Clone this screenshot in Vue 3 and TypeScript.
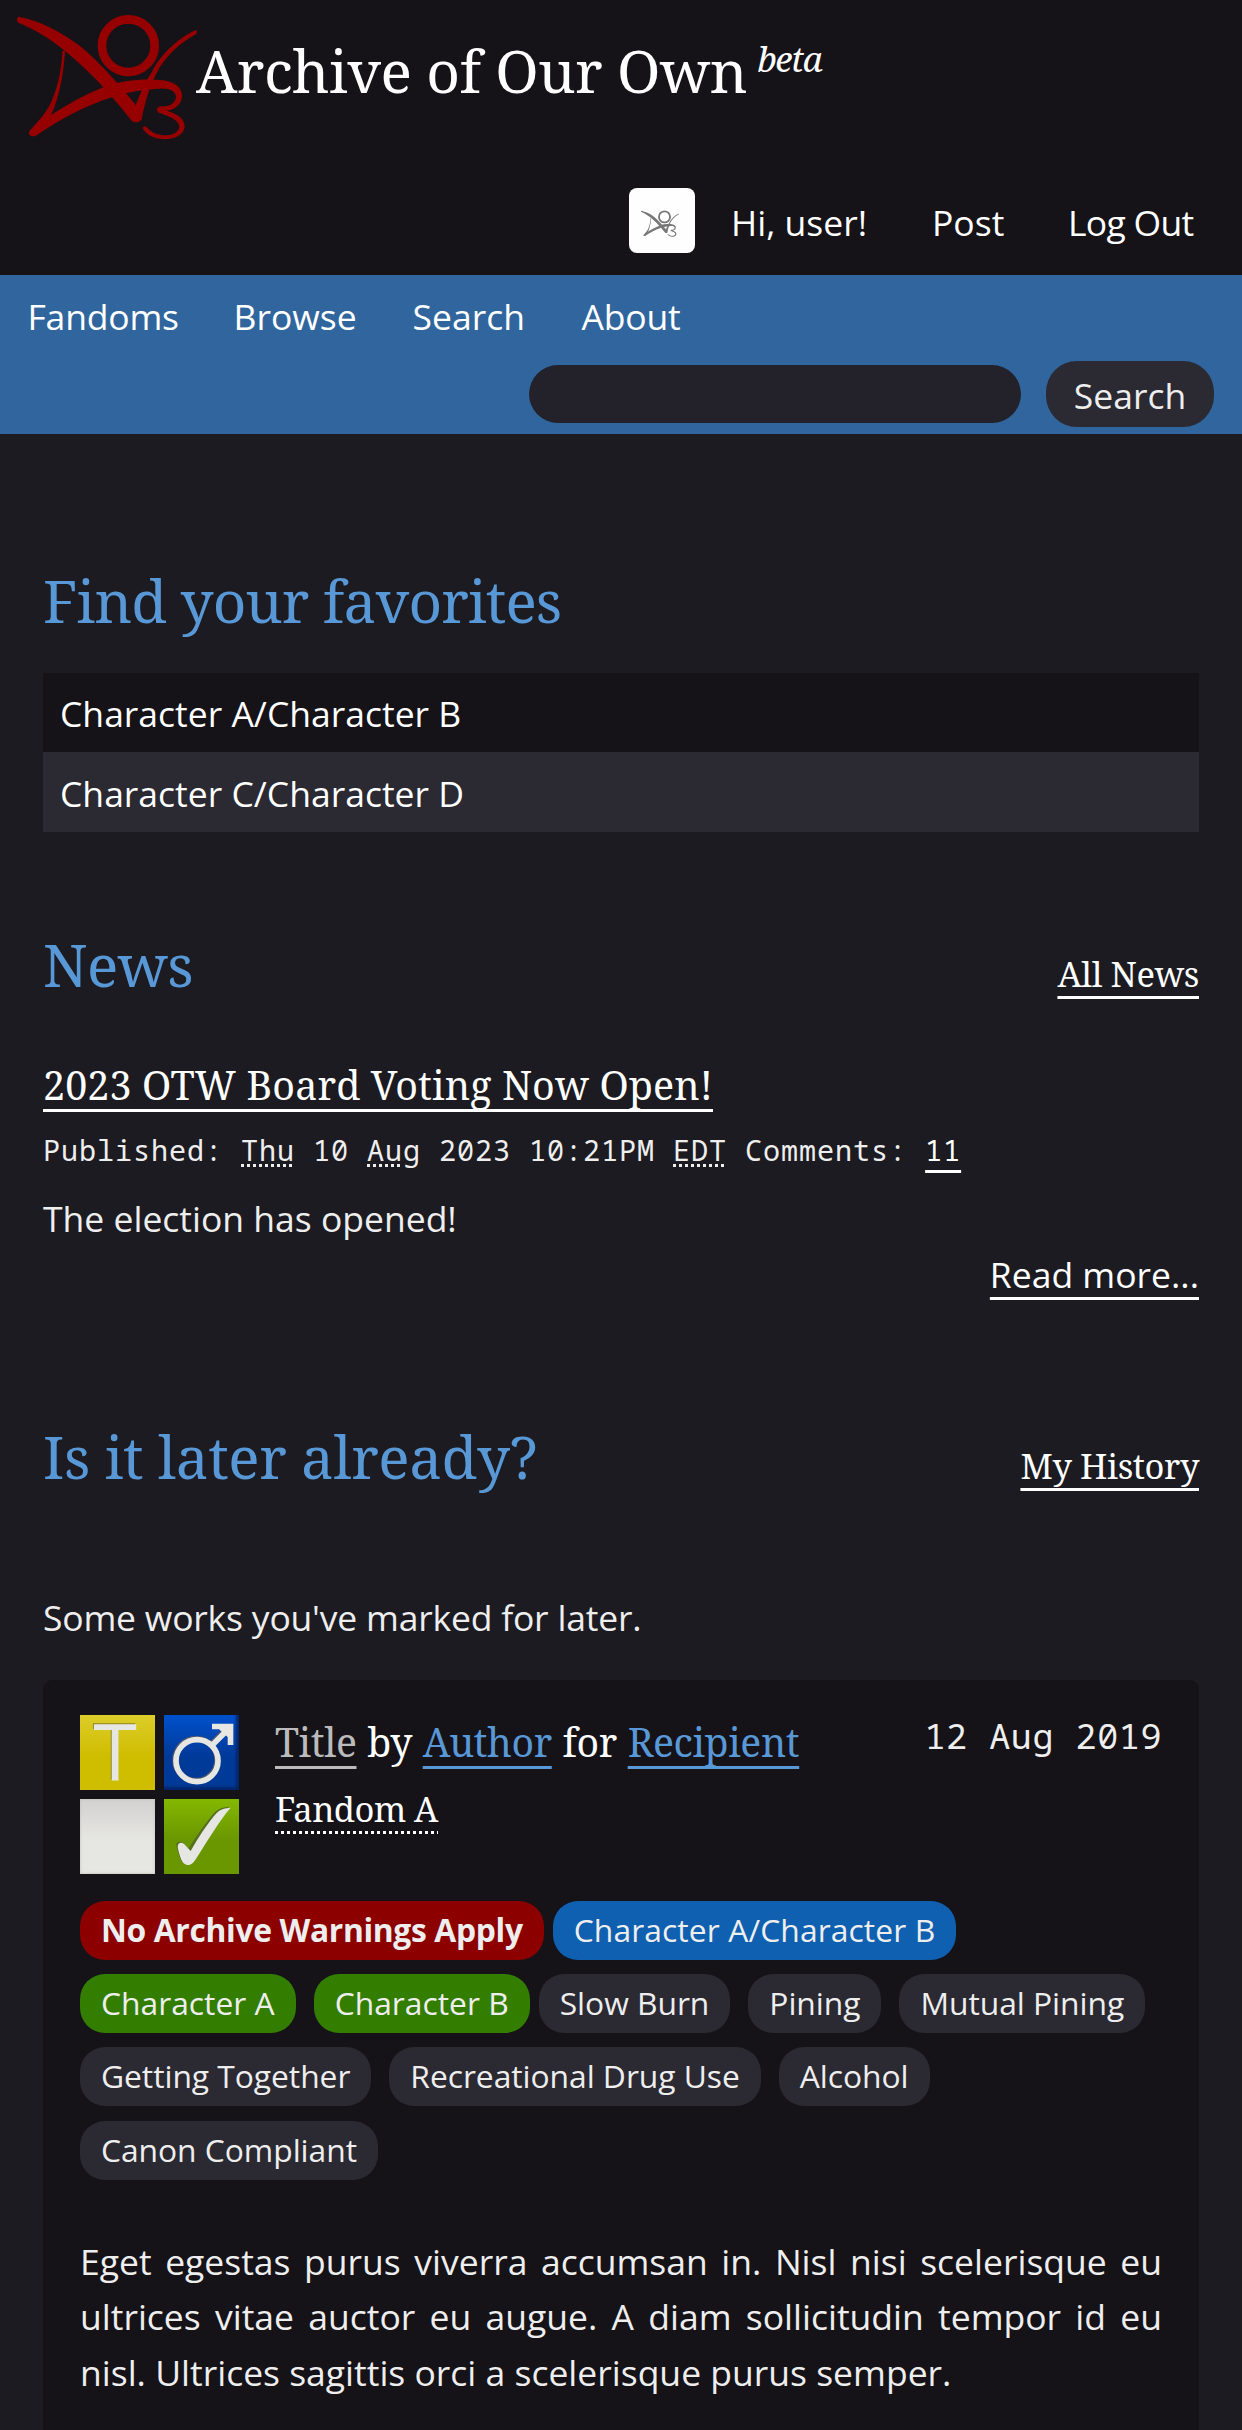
<script setup lang="ts">
interface Tag {
  label: string
  kind: 'warning' | 'relationship' | 'character' | 'freeform'
  last?: boolean
}

const menu: string[] = ['Fandoms', 'Browse', 'Search', 'About']
const favorites: string[] = ['Character A/Character B', 'Character C/Character D']
const tags: Tag[] = [
  { label: 'No Archive Warnings Apply', kind: 'warning', last: true },
  { label: 'Character A/Character B', kind: 'relationship', last: true },
  { label: 'Character A', kind: 'character' },
  { label: 'Character B', kind: 'character', last: true },
  { label: 'Slow Burn', kind: 'freeform' },
  { label: 'Pining', kind: 'freeform' },
  { label: 'Mutual Pining', kind: 'freeform' },
  { label: 'Getting Together', kind: 'freeform' },
  { label: 'Recreational Drug Use', kind: 'freeform' },
  { label: 'Alcohol', kind: 'freeform' },
  { label: 'Canon Compliant', kind: 'freeform' },
]
</script>

<template>
  <div class="page">
    <header class="header">
      <div class="brand">
        <svg class="logo" viewBox="51 42 540 378">
          <g id="ao3-mark">
            <circle cx="385" cy="137" r="79" fill="none" stroke="currentColor" stroke-width="26" />
            <path d="M55 50C120 62 185 96 240 138C300 188 350 245 402 308L426 345C428 366 408 372 395 362C355 312 325 278 290 240C235 184 150 104 55 68C49 63 50 53 55 50Z" fill="currentColor" />
            <path d="M590 89C535 112 480 165 456 215C432 250 412 300 398 340L424 362C432 320 442 280 458 245C478 190 525 135 590 101Z" fill="currentColor" />
            <path d="M187 152C184 225 165 300 132 342C118 362 98 380 88 396C84 408 100 414 112 404C134 382 152 352 163 322C182 270 192 210 195 154Z" fill="currentColor" />
            <path d="M90 391C160 336 240 290 310 262C370 238 440 236 490 241C530 246 548 268 546 290C544 314 522 330 500 332C536 342 556 360 554 382C550 408 520 418 494 418C466 418 436 404 428 384C430 377 435 378 440 382C456 400 476 406 496 406C520 406 536 396 538 380C538 364 516 350 476 338C468 332 470 322 480 319C508 322 528 308 528 290C526 272 506 264 478 266C440 268 400 272 340 290C260 314 180 358 112 404C98 414 82 404 90 391Z" fill="currentColor" />
          </g>
        </svg>
        <h1 class="site">Archive of Our Own<sup>beta</sup></h1>
      </div>
      <nav class="greeting">
        <span class="avatar">
          <svg viewBox="51 42 540 378"><use href="#ao3-mark" /></svg>
        </span>
        <a>Hi, user!</a>
        <a>Post</a>
        <a class="logout">Log Out</a>
      </nav>
    </header>

    <nav class="primary">
      <div class="menu">
        <a v-for="item in menu" :key="item">{{ item }}</a>
      </div>
      <form class="search" @submit.prevent>
        <input type="text" />
        <button type="submit">Search</button>
      </form>
    </nav>

    <main class="main">
      <h2 class="find">Find your favorites</h2>
      <ul class="favorites">
        <li v-for="fav in favorites" :key="fav">{{ fav }}</li>
      </ul>

      <div class="heading news">
        <h2>News</h2>
        <a class="more">All News</a>
      </div>
      <h3 class="post-title"><a>2023 OTW Board Voting Now Open!</a></h3>
      <p class="meta">Published: <abbr>Thu</abbr> 10 <abbr class="short">Aug</abbr> 2023 10:21PM <abbr>EDT</abbr> Comments: <a>11</a></p>
      <p class="summary">The election has opened!</p>
      <p class="read"><a>Read more...</a></p>

      <div class="heading later">
        <h2>Is it later already?</h2>
        <a class="more">My History</a>
      </div>
      <p class="note">Some works you've marked for later.</p>

      <article class="work">
        <div class="work-head">
          <div class="required">
            <svg class="tile teen" viewBox="0 0 225 225">
              <text class="shade" x="102" y="196" text-anchor="middle">T</text>
              <text x="105" y="198" text-anchor="middle">T</text>
            </svg>
            <svg class="tile male" viewBox="0 0 225 225">
              <g class="shade" transform="translate(-3 -3)">
                <circle cx="99" cy="137" r="63" />
                <path d="M143 92L190 45" />
              </g>
              <g>
                <circle cx="99" cy="137" r="63" />
                <path d="M143 92L190 45" />
                <path class="solid" d="M144 26H208V90H191V66L165 43H144Z" />
              </g>
            </svg>
            <svg class="tile blank" viewBox="0 0 225 225" />
            <svg class="tile done" viewBox="0 0 225 225">
              <path class="tick-shade" d="M40 137C48 128 58 130 64 139L76 152C100 115 132 68 156 42C170 30 184 27 198 26C164 65 132 120 100 170C88 190 80 198 70 198C58 198 52 188 47 168C43 152 40 146 40 137Z" transform="translate(-3 -3)" />
              <path class="tick" d="M42 137C48 128 58 130 64 139L80 156C102 117 134 68 158 42C170 30 184 27 200 26C166 65 134 120 102 170C90 190 82 198 72 198C60 198 52 188 47 168C43 152 40 146 42 137Z" />
            </svg>
          </div>
          <div class="work-title">
            <h4><a class="visited">Title</a> by <a class="blue">Author</a> for <a class="blue">Recipient</a></h4>
            <h5><a>Fandom A</a></h5>
          </div>
          <p class="date">12 Aug 2019</p>
        </div>
        <ul class="tags">
          <li v-for="(tag, i) in tags" :key="i" :class="[tag.kind, { last: tag.last }]">{{ tag.label }}</li>
        </ul>
        <p class="blurb">Eget egestas purus viverra accumsan in. Nisl nisi scelerisque eu ultrices vitae auctor eu augue. A diam sollicitudin tempor id eu nisl. Ultrices sagittis orci a scelerisque purus semper.</p>
      </article>
    </main>
  </div>
</template>

<style>
body {
  margin: 0;
  background: #1c1b21;
}
</style>

<style scoped>
.page {
  width: 1242px;
  height: 2430px;
  overflow: hidden;
  background: #1c1b21;
  color: #eee;
  font-family: 'Open Sans', 'Noto Sans', sans-serif;
  font-size: 35.5px;
  line-height: 56px;
}
h1, h2, h3, h4, h5, p, ul {
  margin: 0;
  padding: 0;
  font-weight: 400;
  list-style: none;
}
h1, h2, h3, h4, h5, .more {
  font-family: 'Noto Serif', 'Liberation Serif', serif;
}
a {
  color: #fff;
}

.header {
  box-sizing: border-box;
  height: 275px;
  padding: 14px 0 0 17px;
  background: #151218;
}
.brand {
  display: flex;
  align-items: flex-start;
}
.logo {
  width: 180px;
  height: 126px;
  color: #960000;
}
.site {
  margin: 16px 0 0 -1px;
  color: #fff;
  font-size: 58.6px;
  line-height: 80px;
  letter-spacing: -0.5px;
  white-space: nowrap;
}
.site sup {
  margin-left: 10px;
  font-size: 35px;
  font-style: italic;
  line-height: 0;
  letter-spacing: -1.5px;
  vertical-align: 21px;
}
.greeting {
  display: grid;
  grid-template-columns: 102px 201px 136px auto;
  margin: 48px 0 0 612px;
  line-height: 68px;
  height: 65px;
}
.logout {
  letter-spacing: -0.7px;
}
.avatar {
  width: 66px;
  height: 65px;
  border-radius: 8px;
  background: #fefefe;
  line-height: 0;
}
.avatar svg {
  width: 38px;
  height: 27px;
  margin: 22px 0 0 12px;
  color: #777;
}

.primary {
  box-sizing: border-box;
  height: 159px;
  padding-top: 13px;
  background: #30669d;
}
.menu {
  display: grid;
  grid-template-columns: 206px 179px 169px auto;
  padding-left: 27.5px;
}
.menu a:first-child,
.menu a:last-child {
  letter-spacing: -0.2px;
}
.search {
  display: flex;
  justify-content: flex-end;
  align-items: center;
  gap: 25px;
  margin: 17px 28px 0 0;
}
.search input {
  box-sizing: border-box;
  width: 492px;
  height: 58px;
  border: 0;
  border-radius: 29px;
  background: #23212a;
}
.search button {
  width: 168px;
  height: 66px;
  padding: 1px 0 0;
  border: 0;
  border-radius: 31px;
  background: #2b2932;
  color: #eee;
  font: inherit;
}

.main {
  padding: 127px 43px 0;
}
h2 {
  color: #5998d6;
  font-size: 58.4px;
  line-height: 80px;
  letter-spacing: -0.6px;
}
.find {
  letter-spacing: -0.85px;
}
.later h2 {
  letter-spacing: -0.4px;
}
.favorites {
  margin-top: 32px;
  color: #fff;
}
.favorites li {
  box-sizing: border-box;
  height: 80px;
  padding: 1px 17px 0;
  background: #2b2932;
  line-height: 80px;
}
.favorites li:first-child {
  height: 79px;
  padding-top: 0;
  background: #151218;
}
.heading {
  display: flex;
  justify-content: space-between;
  align-items: baseline;
}
.more {
  font-size: 34.5px;
  line-height: 50px;
  letter-spacing: -0.4px;
}
.more,
.post-title a,
.meta a,
.read a,
h4 a {
  text-decoration: underline;
  text-decoration-thickness: 3px;
  text-decoration-skip-ink: none;
  text-underline-offset: 9px;
}
.news {
  margin-top: 93px;
}
.post-title {
  margin-top: 50px;
  font-size: 39.4px;
  line-height: 60px;
  letter-spacing: 0.12px;
}
.meta {
  margin-top: 10px;
  font-family: 'Noto Sans Mono', 'Liberation Mono', monospace;
  font-size: 28.5px;
  line-height: 50px;
  letter-spacing: 0.9px;
  white-space: nowrap;
}
.meta abbr {
  background: repeating-linear-gradient(90deg, #eee 0 3px, transparent 3px 6px) 0 calc(100% - 2px) / 100% 3px no-repeat;
  text-decoration: none;
}
.meta abbr.short {
  background-size: 34px 3px;
}
.summary {
  margin-top: 15px;
}
.read {
  text-align: right;
}
.later {
  margin-top: 115px;
}
.note {
  margin-top: 92px;
  letter-spacing: -0.2px;
}

.work {
  min-height: 800px;
  margin-top: 35px;
  padding: 35px 37px 0;
  border-radius: 9px;
  background: #151218;
}
.work-head {
  display: flex;
  align-items: flex-start;
}
.required {
  display: grid;
  grid-template-columns: 75px 75px;
  gap: 9px;
  margin-right: 36px;
}
.tile {
  display: block;
  width: 75px;
  height: 75px;
  overflow: visible;
}
.tile text {
  font-family: 'Open Sans', sans-serif;
  font-size: 238px;
  fill: #e6e6e2;
}
.tile text.shade {
  fill: #8d8420;
}
.teen {
  background: linear-gradient(#dccd2a, #cfbd00 55%);
}
.male {
  background: linear-gradient(#0050cc, #003a98 55%);
  box-shadow: inset -3px -3px 3px #00266a;
}
.male g {
  fill: none;
  stroke: #e6e6e2;
  stroke-width: 17;
}
.male g.shade {
  stroke: #4a5570;
}
.male .solid {
  fill: #e6e6e2;
  stroke: none;
}
.blank {
  background: linear-gradient(#d2d1d0, #e6e6e2 55%);
  box-shadow: inset 0 0 3px #bdbdb8;
}
.done {
  background: linear-gradient(#84b800, #6a9600 55%);
}
.tick {
  fill: #e6e6e2;
}
.tick-shade {
  fill: #556e20;
}
.work-title {
  flex: 1;
  margin-top: -4px;
}
h4 {
  color: #fff;
  font-size: 39.2px;
  line-height: 62px;
  letter-spacing: -0.4px;
  word-spacing: 1px;
  white-space: nowrap;
}
h4 .visited {
  color: #bbb;
}
h4 .blue {
  color: #5998d6;
}
h5 {
  margin-top: 6px;
  font-size: 34.5px;
  line-height: 60px;
  letter-spacing: -0.6px;
}
h5 a {
  padding-bottom: 2px;
  background: repeating-linear-gradient(90deg, #fff 0 3px, transparent 3px 6px) 0 100% / 100% 3px no-repeat;
}
.date {
  margin-top: -4px;
  font-family: 'Noto Sans Mono', 'Liberation Mono', monospace;
  font-size: 35px;
  line-height: 50px;
  letter-spacing: 0.6px;
}
.tags {
  display: flex;
  flex-wrap: wrap;
  row-gap: 14.2px;
  margin: 27px -16px 0 0;
}
.tags li {
  box-sizing: border-box;
  height: 59px;
  margin-right: 18px;
  padding: 0 21px;
  border-radius: 25px;
  background: #2b2932;
  font-size: 31.8px;
  line-height: 57px;
  letter-spacing: -0.05px;
  white-space: nowrap;
}
.tags li.last {
  margin-right: 9px;
}
.tags li.warning {
  background: #8c0000;
  font-weight: 700;
  letter-spacing: -0.34px;
}
.tags li.relationship {
  background: #0f60b0;
  letter-spacing: 0.1px;
}
.tags li.character {
  background: #337d00;
  letter-spacing: 0;
}
.blurb {
  margin-top: 54px;
  line-height: 55.6px;
  text-align: justify;
}
</style>
